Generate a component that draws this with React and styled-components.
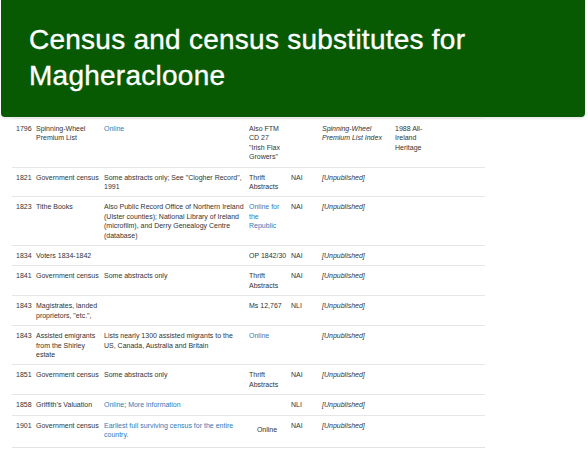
import React from 'react';
import styled, { createGlobalStyle } from 'styled-components';

const GlobalStyle = createGlobalStyle`
  body {
    margin: 0;
    background: #ffffff;
    font-family: "Liberation Sans", Arial, sans-serif;
  }
`;

const Page = styled.div`
  width: 588px;
  height: 451px;
  overflow: hidden;
  background: #ffffff;
`;

const Banner = styled.header`
  margin: 0 3px 0 1px;
  padding: 22px 28px 23px;
  background: #075a02;
  border-radius: 0 0 4px 4px;
  box-shadow: 0 2px 2px rgba(0, 0, 0, 0.08);
`;

const Title = styled.h1`
  margin: 0;
  color: #ffffff;
  font-size: 28px;
  font-weight: 400;
  line-height: 36px;
  letter-spacing: 0.25px;
  -webkit-text-stroke: 0.35px #ffffff;
`;

const Table = styled.table`
  margin: 1px 0 0 12px;
  width: 473px;
  table-layout: fixed;
  border-collapse: collapse;
  font-size: 7px;
  line-height: 9.4px;
  color: #333333;
  border-bottom: 1px solid #e2e2e2;
`;

const Cell = styled.td`
  padding: 5px ${p => p.$right ?? 1}px ${p => p.$bottom ?? 5}px 4px;
  border-top: 1px solid #e6e6e6;
  vertical-align: ${p => (p.$middle ? 'middle' : 'top')};
  text-align: ${p => (p.$center ? 'center' : 'left')};
  font-style: ${p => (p.$italic ? 'italic' : 'normal')};
  white-space: ${p => (p.$nowrap ? 'nowrap' : 'normal')};
`;

const Link = styled.a`
  color: #337ab7;
  text-decoration: none;
`;

const widths = [20, 68, 145, 42, 31, 73, 44, 50];

const rows = [
  {
    year: '1796',
    name: 'Spinning-Wheel Premium List',
    desc: <Link href="#">Online</Link>,
    ref: 'Also FTM CD 27 "Irish Flax Growers"',
    repo: '',
    pub: 'Spinning-Wheel Premium List Index',
    extra: '1988 All-Ireland Heritage',
  },
  {
    year: '1821',
    name: 'Government census',
    desc: 'Some abstracts only; See "Clogher Record", 1991',
    ref: 'Thrift Abstracts',
    repo: 'NAI',
    pub: '[Unpublished]',
  },
  {
    year: '1823',
    name: 'Tithe Books',
    desc: 'Also Public Record Office of Northern Ireland (Ulster counties); National Library of Ireland (microfilm), and Derry Genealogy Centre (database)',
    ref: <Link href="#">Online for the Republic</Link>,
    repo: 'NAI',
    pub: '[Unpublished]',
  },
  {
    year: '1834',
    name: 'Voters 1834-1842',
    desc: '',
    ref: 'OP 1842/30',
    refNowrap: true,
    repo: 'NAI',
    pub: '[Unpublished]',
  },
  {
    year: '1841',
    name: 'Government census',
    desc: 'Some abstracts only',
    ref: 'Thrift Abstracts',
    repo: 'NAI',
    pub: '[Unpublished]',
  },
  {
    year: '1843',
    name: 'Magistrates, landed proprietors, "etc.",',
    desc: '',
    ref: 'Ms 12,767',
    repo: 'NLI',
    pub: '[Unpublished]',
  },
  {
    year: '1843',
    name: 'Assisted emigrants from the Shirley estate',
    desc: 'Lists nearly 1300 assisted migrants to the US, Canada, Australia and Britain',
    ref: <Link href="#">Online</Link>,
    repo: '',
    pub: '[Unpublished]',
  },
  {
    year: '1851',
    name: 'Government census',
    desc: 'Some abstracts only',
    ref: 'Thrift Abstracts',
    repo: 'NAI',
    pub: '[Unpublished]',
  },
  {
    year: '1858',
    name: 'Griffith’s Valuation',
    desc: (
      <>
        <Link href="#">Online</Link>; <Link href="#">More information</Link>
      </>
    ),
    ref: '',
    repo: 'NLI',
    pub: '[Unpublished]',
  },
  {
    year: '1901',
    name: 'Government census',
    desc: <Link href="#">Earliest full surviving census for the entire country.</Link>,
    ref: 'Online',
    refCentered: true,
    repo: 'NAI',
    pub: '[Unpublished]',
    last: true,
  },
];

export default function App() {
  return (
    <Page>
      <GlobalStyle />
      <Banner>
        <Title>Census and census substitutes for Magheracloone</Title>
      </Banner>
      <Table>
        <colgroup>
          {widths.map((w, i) => (
            <col key={i} style={{ width: w }} />
          ))}
        </colgroup>
        <tbody>
          {rows.map((r, i) => {
            const bottom = r.last ? 8 : 5;
            return (
              <tr key={i}>
                <Cell $bottom={bottom}>{r.year}</Cell>
                <Cell $bottom={bottom}>{r.name}</Cell>
                <Cell $bottom={bottom} $right={0}>{r.desc}</Cell>
                <Cell
                  $bottom={bottom}
                  $right={2}
                  $nowrap={r.refNowrap}
                  $center={r.refCentered}
                  $middle={r.refCentered}
                >
                  {r.ref}
                </Cell>
                <Cell $bottom={bottom}>{r.repo}</Cell>
                <Cell $bottom={bottom} $italic>{r.pub}</Cell>
                <Cell $bottom={bottom}>{r.extra || ''}</Cell>
                <Cell $bottom={bottom} />
              </tr>
            );
          })}
        </tbody>
      </Table>
    </Page>
  );
}
